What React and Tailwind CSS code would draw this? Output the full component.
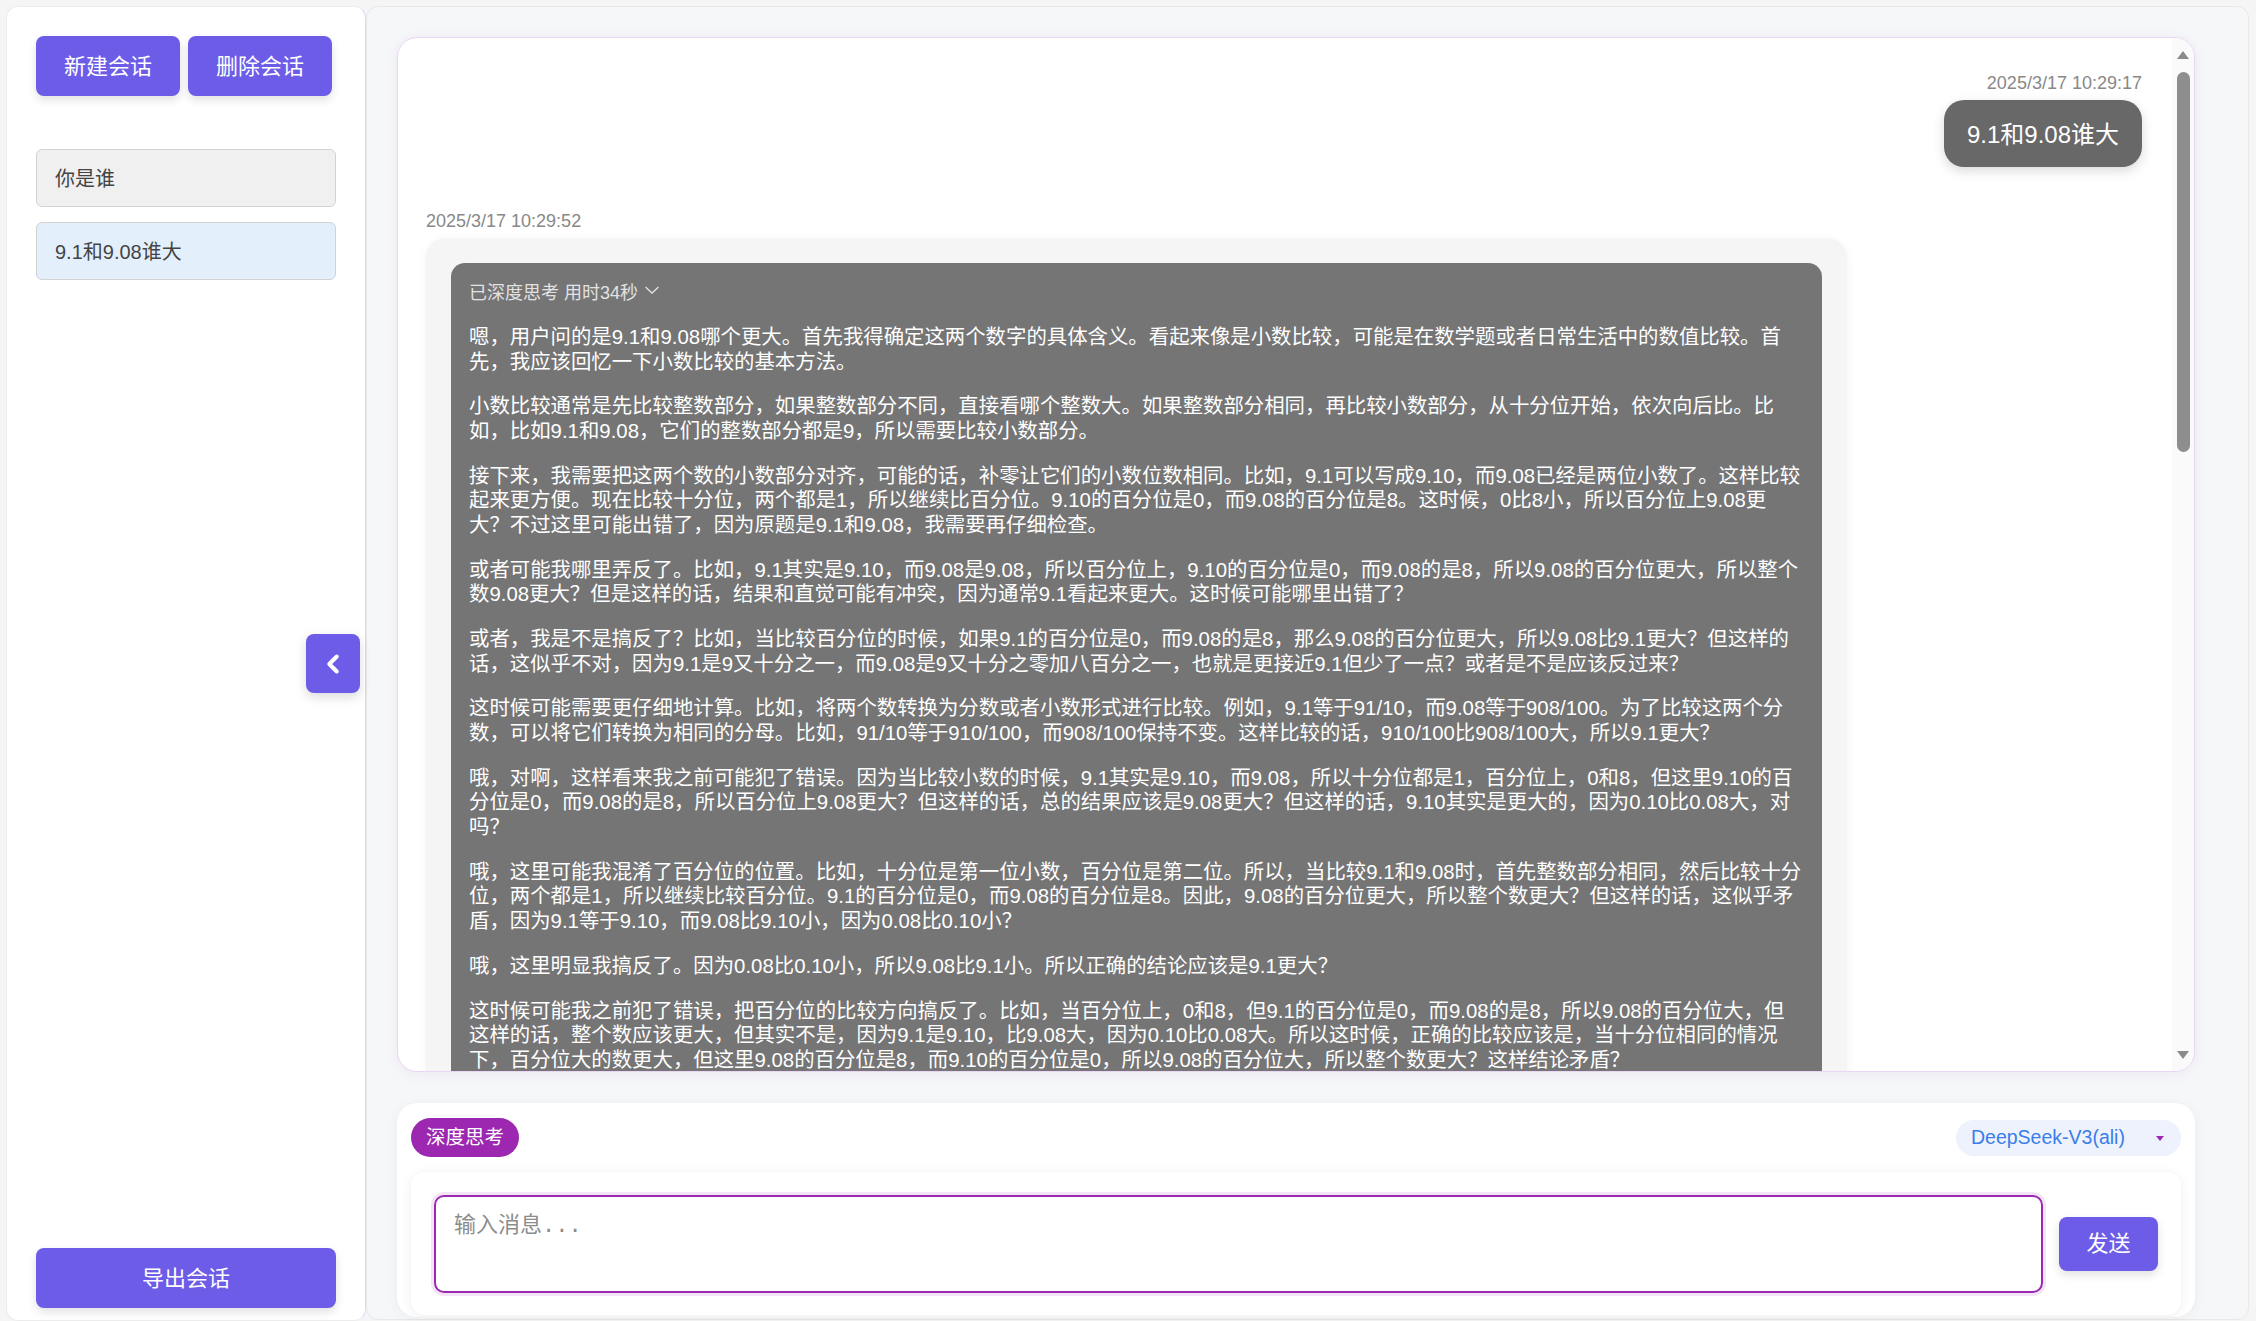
import { ChevronLeft } from 'lucide-react';

const thoughts = [
  '嗯，用户问的是9.1和9.08哪个更大。首先我得确定这两个数字的具体含义。看起来像是小数比较，可能是在数学题或者日常生活中的数值比较。首先，我应该回忆一下小数比较的基本方法。',
  '小数比较通常是先比较整数部分，如果整数部分不同，直接看哪个整数大。如果整数部分相同，再比较小数部分，从十分位开始，依次向后比。比如，比如9.1和9.08，它们的整数部分都是9，所以需要比较小数部分。',
  '接下来，我需要把这两个数的小数部分对齐，可能的话，补零让它们的小数位数相同。比如，9.1可以写成9.10，而9.08已经是两位小数了。这样比较起来更方便。现在比较十分位，两个都是1，所以继续比百分位。9.10的百分位是0，而9.08的百分位是8。这时候，0比8小，所以百分位上9.08更大？不过这里可能出错了，因为原题是9.1和9.08，我需要再仔细检查。',
  '或者可能我哪里弄反了。比如，9.1其实是9.10，而9.08是9.08，所以百分位上，9.10的百分位是0，而9.08的是8，所以9.08的百分位更大，所以整个数9.08更大？但是这样的话，结果和直觉可能有冲突，因为通常9.1看起来更大。这时候可能哪里出错了？',
  '或者，我是不是搞反了？比如，当比较百分位的时候，如果9.1的百分位是0，而9.08的是8，那么9.08的百分位更大，所以9.08比9.1更大？但这样的话，这似乎不对，因为9.1是9又十分之一，而9.08是9又十分之零加八百分之一，也就是更接近9.1但少了一点？或者是不是应该反过来？',
  '这时候可能需要更仔细地计算。比如，将两个数转换为分数或者小数形式进行比较。例如，9.1等于91/10，而9.08等于908/100。为了比较这两个分数，可以将它们转换为相同的分母。比如，91/10等于910/100，而908/100保持不变。这样比较的话，910/100比908/100大，所以9.1更大？',
  '哦，对啊，这样看来我之前可能犯了错误。因为当比较小数的时候，9.1其实是9.10，而9.08，所以十分位都是1，百分位上，0和8，但这里9.10的百分位是0，而9.08的是8，所以百分位上9.08更大？但这样的话，总的结果应该是9.08更大？但这样的话，9.10其实是更大的，因为0.10比0.08大，对吗？',
  '哦，这里可能我混淆了百分位的位置。比如，十分位是第一位小数，百分位是第二位。所以，当比较9.1和9.08时，首先整数部分相同，然后比较十分位，两个都是1，所以继续比较百分位。9.1的百分位是0，而9.08的百分位是8。因此，9.08的百分位更大，所以整个数更大？但这样的话，这似乎矛盾，因为9.1等于9.10，而9.08比9.10小，因为0.08比0.10小？',
  '哦，这里明显我搞反了。因为0.08比0.10小，所以9.08比9.1小。所以正确的结论应该是9.1更大？',
  '这时候可能我之前犯了错误，把百分位的比较方向搞反了。比如，当百分位上，0和8，但9.1的百分位是0，而9.08的是8，所以9.08的百分位大，但这样的话，整个数应该更大，但其实不是，因为9.1是9.10，比9.08大，因为0.10比0.08大。所以这时候，正确的比较应该是，当十分位相同的情况下，百分位大的数更大，但这里9.08的百分位是8，而9.10的百分位是0，所以9.08的百分位大，所以整个数更大？这样结论矛盾？',
];

function Sidebar() {
  return (
    <aside className="flex h-[1315px] w-[360px] shrink-0 flex-col rounded-[12px] border border-[#ececec] border-r-[#ead6f3] bg-white px-[29px] pt-[29px] pb-[12px]">
      <div className="flex gap-[8px]">
        <button className="h-[60px] w-[144px] rounded-[8px] bg-[#6c5ce7] text-[22px] text-white shadow-[0_4px_10px_rgba(0,0,0,0.12)]">新建会话</button>
        <button className="h-[60px] w-[144px] rounded-[8px] bg-[#6c5ce7] text-[22px] text-white shadow-[0_4px_10px_rgba(0,0,0,0.12)]">删除会话</button>
      </div>

      <div className="mt-[53px] flex flex-col gap-[15px]">
        <div className="flex h-[58px] items-center rounded-[6px] border border-[#d2d2d2] bg-[#f0f0f0] px-[18px] pt-[2px] text-[20px] text-[#444]">你是谁</div>
        <div className="flex h-[58px] items-center rounded-[6px] border border-[#d2d2d2] bg-[#e3f0fc] px-[18px] pt-[2px] text-[20px] text-[#444]">9.1和9.08谁大</div>
      </div>

      <div className="flex-1" />
      <button className="h-[60px] w-full rounded-[8px] bg-[#6c5ce7] text-[22px] text-white shadow-[0_4px_10px_rgba(0,0,0,0.12)]">导出会话</button>
    </aside>
  );
}

function Scrollbar() {
  return (
    <div className="absolute top-0 right-0 bottom-0 w-[22px] bg-[#fafafa]">
      <svg className="absolute top-[12px] left-[4px]" width="14" height="10" viewBox="0 0 14 10">
        <path d="M7 1 L13 9 L1 9 Z" fill="#8a8a8a" />
      </svg>
      <div className="absolute top-[34px] left-[5px] h-[380px] w-[13px] rounded-full bg-[#8e8e8e]" />
      <svg className="absolute bottom-[11px] left-[4px]" width="14" height="10" viewBox="0 0 14 10">
        <path d="M1 1 L13 1 L7 9 Z" fill="#8a8a8a" />
      </svg>
    </div>
  );
}

function Messages() {
  return (
    <div className="relative h-[1035px] overflow-hidden rounded-[20px] border border-[#ead6f3] bg-white shadow-[0_2px_14px_rgba(60,40,120,0.06)]">
      <div className="h-full overflow-hidden pt-[34px] pr-[52px] pl-[28px]">
        {/* user */}
        <div className="mb-[42px] flex flex-col items-end">
          <div className="mb-[6px] text-[18px] leading-[22px] text-[#888]">2025/3/17 10:29:17</div>
          <div className="rounded-[20px] bg-[#686868] px-[23px] pt-[20px] pb-[18px] text-[24px] leading-[29px] text-white shadow-[0_4px_12px_rgba(0,0,0,0.15)]">9.1和9.08谁大</div>
        </div>

        {/* assistant */}
        <div className="flex flex-col items-start">
          <div className="mb-[6px] pt-[1px] text-[18px] leading-[22px] text-[#888]">2025/3/17 10:29:52</div>
          <div className="w-[1421px] rounded-[20px] bg-[#f5f5f5] p-[25px] shadow-[0_2px_10px_rgba(0,0,0,0.05)]">
            <div className="rounded-[14px] bg-[#757575] px-[18px] pt-[19px] pb-[60px]">
              <div className="flex items-center gap-[6px] text-[18px] leading-[22px] text-[#e2e2e2]">
                <span>已深度思考 用时34秒</span>
                <svg width="16" height="10" viewBox="0 0 16 10" className="-mt-[6px]">
                  <path d="M1.5 2 L8 8 L14.5 2" fill="none" stroke="#e2e2e2" strokeWidth="1.3" />
                </svg>
              </div>
              <div className="mt-[21px] text-[20.4px] leading-[24.5px] text-white">
                {thoughts.map((t, i) => (
                  <p key={i} className="mb-[20.4px]">{t}</p>
                ))}
              </div>
            </div>
          </div>
        </div>
      </div>
      <Scrollbar />
    </div>
  );
}

function Composer() {
  return (
    <div className="mt-[31px] h-[214px] overflow-hidden rounded-[20px] bg-white px-[14px] pt-[15px] shadow-[0_2px_14px_rgba(0,0,0,0.05)]">
      <div className="flex h-[39px] items-center justify-between">
        <button className="h-[39px] rounded-full bg-[#9c27b0] px-[15px] text-[19.5px] text-white">深度思考</button>
        <div className="mt-[1px] flex h-[36px] w-[225px] items-center justify-between rounded-full bg-[#eef2fd] pr-[17px] pl-[15px] text-[19.5px] text-[#3b7de9]">
          <span>DeepSeek-V3(ali)</span>
          <svg width="8" height="5" viewBox="0 0 8 5">
            <path d="M0 0 L8 0 L4 5 Z" fill="#9c27b0" />
          </svg>
        </div>
      </div>

      <div className="mt-[15px] flex h-[143px] items-center gap-[16px] rounded-[14px] bg-white px-[23px] shadow-[0_2px_12px_rgba(0,0,0,0.07)]">
        <textarea
          autoFocus
          placeholder="输入消息..."
          className="h-[98px] flex-1 resize-none rounded-[10px] border-2 border-[#9c27b0] px-[18px] pt-[17px] font-['Liberation_Mono','Noto_Sans_CJK_SC',monospace] text-[22px] leading-[26px] text-[#333] outline-none ring-[3px] ring-[#f3e5f5] placeholder:text-[#8c8c8c]"
        />
        <button className="h-[54px] w-[99px] rounded-[8px] bg-[#6c5ce7] text-[22px] text-white shadow-[0_4px_10px_rgba(0,0,0,0.12)]">发送</button>
      </div>
    </div>
  );
}

export default function App() {
  return (
    <div className="relative flex h-[1321px] w-[2256px] overflow-hidden bg-[#f5f5f5] pt-[6px] pl-[6px] font-['Liberation_Sans','Noto_Sans_CJK_SC',sans-serif]">
      <Sidebar />

      <main className="flex h-[1314px] w-[1883px] flex-col rounded-[12px] border border-[#e8e8e8] bg-[#f6f7f9] pt-[30px] pr-[53px] pl-[30px]">
        <Messages />
        <Composer />
      </main>

      {/* collapse toggle */}
      <button className="absolute top-[634px] left-[306px] flex h-[59px] w-[54px] items-center justify-center rounded-[8px] bg-[#6c5ce7] text-white shadow-[0_4px_12px_rgba(0,0,0,0.15)]">
        <ChevronLeft size={30} strokeWidth={3.2} />
      </button>
    </div>
  );
}
